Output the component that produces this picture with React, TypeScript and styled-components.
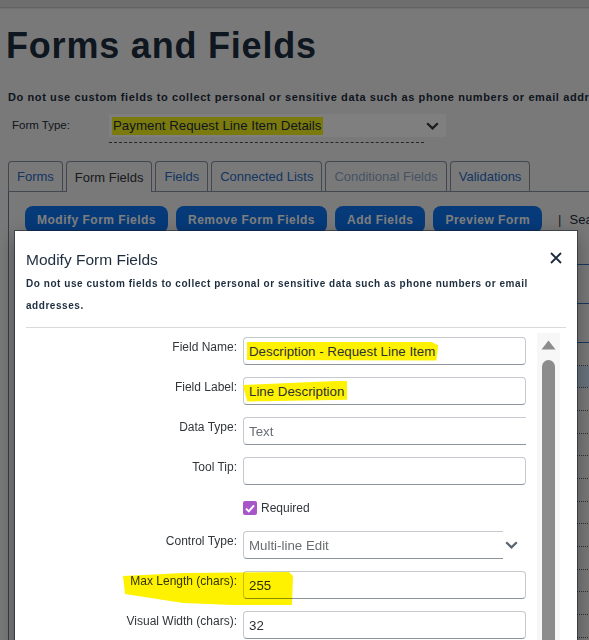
import React from "react";
import styled, { createGlobalStyle } from "styled-components";

const GlobalStyle = createGlobalStyle`
  *, *::before, *::after { box-sizing: border-box; }
  html, body { margin: 0; padding: 0; }
  body {
    width: 589px;
    height: 640px;
    overflow: hidden;
    background: #f3f3f3;
    font-family: "Liberation Sans", Arial, sans-serif;
    color: #32363a;
  }
`;

/* ---------- page behind the dialog ---------- */

const Page = styled.div`
  width: 980px;
`;

const TopBar = styled.header`
  height: 7px;
  background: #dcdcdc;
  box-shadow: 0 1px 2px rgba(0, 0, 0, 0.25);
`;

const Content = styled.main`
  padding-left: 8px;
`;

const Title = styled.h1`
  margin: 17px 0 0 -2px;
  font-size: 36px;
  line-height: 43px;
  font-weight: 700;
  letter-spacing: 0.8px;
  color: #1d2d3e;
`;

const Notice = styled.p`
  margin: 22px 0 0;
  font-size: 11px;
  line-height: 16px;
  font-weight: 700;
  letter-spacing: 0.6px;
  color: #1d2d3e;
  white-space: nowrap;
`;

const FormTypeRow = styled.div`
  display: flex;
  margin-top: 9px;
`;

const FormTypeLabel = styled.span`
  width: 101px;
  padding: 3px 0 0 4px;
  font-size: 11.5px;
  line-height: 16px;
  color: #1d2d3e;
`;

const FormTypeSelect = styled.div`
  display: flex;
  flex-direction: column;
`;

const FormTypeBox = styled.div`
  width: 337px;
  height: 23px;
  padding: 0 7px 0 3px;
  display: flex;
  align-items: center;
  justify-content: space-between;
  background: #ffffff;
  font-size: 13.3px;
  color: #1d2d3e;
`;

const PageMarker = styled.span`
  background: #f5f51c;
  padding: 1px 2px 2px 1px;
`;

const DashedLine = styled.div`
  width: 315px;
  margin-top: 5px;
  border-top: 1px dashed #4a4f55;
`;

const TabStrip = styled.nav`
  display: flex;
  gap: 3px;
  margin-top: 18px;
  border-bottom: 1px solid #878f9f;
`;

const Tab = styled.div<{ $active?: boolean; $disabled?: boolean }>`
  height: ${(p) => (p.$active ? "31px" : "30px")};
  margin-bottom: ${(p) => (p.$active ? "-1px" : "0")};
  padding: 0 8px;
  display: flex;
  align-items: center;
  border: 1px solid #878f9f;
  border-bottom: none;
  border-radius: 4px 4px 0 0;
  background: #f3f3f3;
  font-size: 13px;
  color: ${(p) => (p.$active ? "#32363a" : p.$disabled ? "#8ea6c8" : "#2a6cc4")};
`;

const TabPanel = styled.section`
  border-left: 1px solid #6d7c95;
  padding: 14px 0 0 16px;
  height: 480px;
`;

const Toolbar = styled.div`
  display: flex;
  align-items: center;
  gap: 8px;
`;

const ActionButton = styled.button`
  height: 27px;
  padding: 0 12px;
  border: none;
  border-radius: 8px;
  background: #0c74f2;
  color: #ffffff;
  font-family: "Liberation Sans", Arial, sans-serif;
  font-size: 12px;
  font-weight: 700;
  letter-spacing: 0.5px;
`;

const ToolbarSep = styled.span`
  margin-left: 8px;
  font-size: 13px;
  color: #32363a;
`;

const SearchLabel = styled.span`
  font-size: 13px;
  color: #1d2d3e;
`;

const Table = styled.div`
  margin-top: 6px;
  display: flex;
  flex-direction: column;
`;

const TableRow = styled.div<{ $kind: "head" | "body"; $tall?: boolean; $selected?: boolean }>`
  height: ${(p) => (p.$kind === "head" ? (p.$tall ? "39px" : "26px") : "22.67px")};
  border-bottom: 1px ${(p) => (p.$kind === "head" ? "solid #2f6fc0" : "dotted #5a6068")};
  background: ${(p) => (p.$selected ? "#d3e6fb" : "transparent")};
`;

/* ---------- dialog ---------- */

const Overlay = styled.div`
  position: fixed;
  inset: 0;
  background: rgba(0, 0, 0, 0.5);
`;

const Dialog = styled.div`
  position: fixed;
  left: 15px;
  top: 231px;
  width: 562px;
  height: 440px;
  background: #ffffff;
  box-shadow: 0 0 0 1px rgba(20, 30, 45, 0.55), 0 6px 18px rgba(0, 0, 0, 0.35);
  overflow: hidden;
`;

const DialogHeader = styled.div`
  display: flex;
  justify-content: space-between;
  align-items: flex-start;
  padding: 19px 15px 0 11px;
`;

const DialogTitle = styled.h2`
  margin: 0;
  font-size: 15.5px;
  line-height: 20px;
  font-weight: 400;
  color: #1d2d3e;
`;

const CloseButton = styled.button`
  margin-top: 2px;
  width: 12px;
  height: 12px;
  padding: 0;
  border: none;
  background: none;
  display: flex;
`;

const DialogNotice = styled.p`
  margin: 3px 11px 0;
  font-size: 10px;
  line-height: 22px;
  font-weight: 700;
  letter-spacing: 0.55px;
  color: #1d2d3e;
`;

const Divider = styled.hr`
  margin: 10px 11px 0;
  border: none;
  border-top: 1px solid #d9d9d9;
`;

const DialogBody = styled.div`
  display: flex;
  padding: 5px 17px 0 11px;
`;

const FormGrid = styled.div`
  display: grid;
  grid-template-columns: 211px 283px;
  grid-auto-rows: min-content;
  column-gap: 6px;
  row-gap: 12px;
  align-items: start;
  padding-top: 4px;
`;

const FieldLabel = styled.label`
  position: relative;
  display: block;
  text-align: right;
  font-size: 12px;
  line-height: 20px;
  color: #32363a;
`;

const TextBox = styled.div<{ $muted?: boolean; $flatRight?: boolean; $width?: number }>`
  width: ${(p) => (p.$width ? `${p.$width}px` : "100%")};
  height: 28px;
  padding: 0 5px;
  display: flex;
  align-items: center;
  border: 1px solid #c5c9cd;
  border-bottom-color: #8d949b;
  border-right-width: ${(p) => (p.$flatRight ? "0" : "1px")};
  border-radius: ${(p) => (p.$flatRight ? "4px 0 0 4px" : "4px")};
  background: #ffffff;
  font-size: 13.3px;
  color: ${(p) => (p.$muted ? "#6a6d70" : "#2c3036")};
  white-space: nowrap;
`;

const Marker = styled.span<{ $slant?: boolean }>`
  display: inline-block;
  background: #fff200;
  line-height: 15px;
  padding: ${(p) => (p.$slant ? "3px 3px 3px 6px" : "2px 3px 2px 2px")};
  margin-left: ${(p) => (p.$slant ? "-6px" : "-2px")};
  clip-path: ${(p) =>
    p.$slant
      ? "polygon(0 22%, 100% 0, 100% 92%, 4% 100%)"
      : "polygon(0 3%, 96% 0, 100% 20%, 99% 100%, 0 97%)"};
`;

const Highlight = styled.svg<{ $x: number; $y: number; $w: number; $h: number }>`
  position: absolute;
  left: ${(p) => p.$x}px;
  top: ${(p) => p.$y}px;
  width: ${(p) => p.$w}px;
  height: ${(p) => p.$h}px;
  z-index: 2;
  mix-blend-mode: multiply;
  pointer-events: none;
`;

const CheckRow = styled.div`
  height: 22px;
  display: flex;
  align-items: center;
  gap: 4px;
  font-size: 12px;
  color: #32363a;
`;

const CheckBox = styled.span`
  width: 14px;
  height: 14px;
  border-radius: 2px;
  background: #a855c7;
  display: flex;
  align-items: center;
  justify-content: center;
`;

const SelectRow = styled.div`
  display: flex;
  align-items: center;
  gap: 2px;
`;

const ScrollTrack = styled.div`
  width: 23px;
  height: 320px;
  margin-left: 11px;
  padding-top: 7px;
  display: flex;
  flex-direction: column;
  align-items: center;
  background: #f7f7f7;
`;

const ScrollThumb = styled.div`
  width: 13px;
  flex: 1;
  margin-top: 10px;
  border-radius: 7px 7px 0 0;
  background: #8c8c8c;
`;

const Chevron = ({ color }: { color: string }) => (
  <svg width="13" height="8" viewBox="0 0 13 8">
    <path d="M1.2 1.2 6.5 6.4 11.8 1.2" fill="none" stroke={color} strokeWidth="2.2" />
  </svg>
);

const tabs = ["Forms", "Form Fields", "Fields", "Connected Lists", "Conditional Fields", "Validations"];
const actions = ["Modify Form Fields", "Remove Form Fields", "Add Fields", "Preview Form"];

export default function App() {
  return (
    <>
      <GlobalStyle />
      <Page>
        <TopBar />
        <Content>
          <Title>Forms and Fields</Title>
          <Notice>
            Do not use custom fields to collect personal or sensitive data such as phone numbers or email addresses.
          </Notice>
          <FormTypeRow>
            <FormTypeLabel>Form Type:</FormTypeLabel>
            <FormTypeSelect>
              <FormTypeBox>
                <PageMarker>Payment Request Line Item Details</PageMarker>
                <Chevron color="#32363a" />
              </FormTypeBox>
              <DashedLine />
            </FormTypeSelect>
          </FormTypeRow>
          <TabStrip>
            {tabs.map((t) => (
              <Tab key={t} $active={t === "Form Fields"} $disabled={t === "Conditional Fields"}>
                {t}
              </Tab>
            ))}
          </TabStrip>
          <TabPanel>
            <Toolbar>
              {actions.map((a) => (
                <ActionButton key={a}>{a}</ActionButton>
              ))}
              <ToolbarSep>|</ToolbarSep>
              <SearchLabel>Search</SearchLabel>
            </Toolbar>
            <Table>
              <TableRow $kind="head" />
              <TableRow $kind="head" $tall />
              <TableRow $kind="head" $tall />
              {Array.from({ length: 13 }).map((_, i) => (
                <TableRow key={i} $kind="body" $selected={i === 1} />
              ))}
            </Table>
          </TabPanel>
        </Content>
      </Page>

      <Overlay />

      <Dialog role="dialog">
        <DialogHeader>
          <DialogTitle>Modify Form Fields</DialogTitle>
          <CloseButton aria-label="Close">
            <svg width="12" height="12" viewBox="0 0 12 12">
              <path d="M1 1 11 11M11 1 1 11" stroke="#1d2d3e" strokeWidth="1.8" />
            </svg>
          </CloseButton>
        </DialogHeader>
        <DialogNotice>
          Do not use custom fields to collect personal or sensitive data such as phone numbers or email addresses.
        </DialogNotice>
        <Divider />
        <DialogBody>
          <FormGrid>
            <FieldLabel>Field Name:</FieldLabel>
            <TextBox>
              <Marker>Description - Request Line Item</Marker>
            </TextBox>

            <FieldLabel>Field Label:</FieldLabel>
            <TextBox>
              <Marker $slant>Line Description</Marker>
            </TextBox>

            <FieldLabel>Data Type:</FieldLabel>
            <TextBox $muted $flatRight>
              Text
            </TextBox>

            <FieldLabel>Tool Tip:</FieldLabel>
            <TextBox />

            <span />
            <CheckRow>
              <CheckBox>
                <svg width="10" height="9" viewBox="0 0 10 9">
                  <path d="M1 4.6 3.8 7.4 9 1.4" fill="none" stroke="#fff" strokeWidth="2" />
                </svg>
              </CheckBox>
              Required
            </CheckRow>

            <FieldLabel>Control Type:</FieldLabel>
            <SelectRow>
              <TextBox $muted $flatRight $width={260}>
                Multi-line Edit
              </TextBox>
              <Chevron color="#5b6570" />
            </SelectRow>

            <FieldLabel>
              Max Length (chars):
              <Highlight $x={97} $y={1} $w={172} $h={34} viewBox="0 0 172 34">
                <polygon points="0,4 60,1 166,0 170,4 169,33 110,33 60,31 2,22" fill="#fff200" />
              </Highlight>
            </FieldLabel>
            <TextBox>255</TextBox>

            <FieldLabel>Visual Width (chars):</FieldLabel>
            <TextBox>32</TextBox>
          </FormGrid>
          <ScrollTrack>
            <svg width="15" height="10" viewBox="0 0 15 10">
              <path d="M7.5 0.5 14.5 9.5H0.5Z" fill="#8c8c8c" />
            </svg>
            <ScrollThumb />
          </ScrollTrack>
        </DialogBody>
      </Dialog>
    </>
  );
}
